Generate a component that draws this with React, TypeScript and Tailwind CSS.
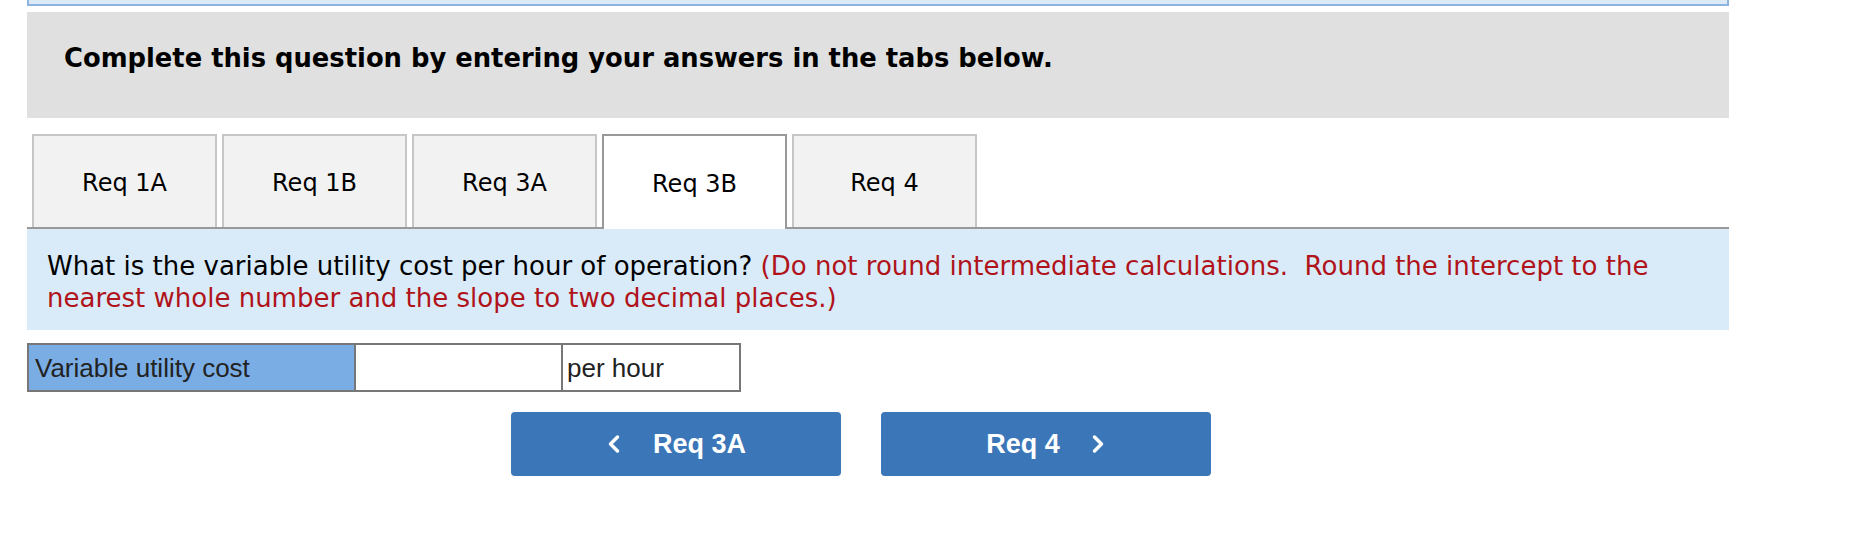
import { ChevronLeft, ChevronRight } from "lucide-react";

const tabs = ["Req 1A", "Req 1B", "Req 3A", "Req 3B", "Req 4"];

export default function App() {
  const active = "Req 3B";

  return (
    <div className="w-[1855px] h-[552px] bg-white font-['DejaVu_Sans',sans-serif] text-black">
      <div className="ml-[27px] w-[1702px]">
        {/* bottom edge of previous panel */}
        <div className="h-[6px] border-x-2 border-b-2 border-[#8db3df] bg-[#dce9f6]" />

        {/* Header */}
        <div className="mt-[6px] h-[106px] bg-[#e0e0e0] flex items-center pl-[37px] pb-[14px]">
          <h1 className="text-[25.8px] font-bold">
            Complete this question by entering your answers in the tabs below.
          </h1>
        </div>

        {/* Tabs */}
        <div className="mt-[16px] flex gap-[5px] pl-[5px] border-b-2 border-[#999999]">
          {tabs.map((t) => (
            <div key={t}
              className={`w-[185px] flex items-center justify-center text-[24px] pt-[3px] -mb-[2px] ${t === active ? "bg-white border-2 border-b-0 border-[#999999] h-[95px]" : "bg-[#f2f2f2] border-2 border-b-0 border-[#c6c6c6] h-[93px]"}`}>
              {t}
            </div>
          ))}
        </div>

        {/* Question */}
        <div className="bg-[#d9ebf9] h-[101px] pl-[20px] pr-[40px] pt-[21px] text-[26px] leading-[32px]">
          What is the variable utility cost per hour of operation?{" "}
          <span className="text-[#b0131a]">
            (Do not round intermediate calculations.&nbsp; Round the intercept to the nearest whole number and the slope to two decimal places.)
          </span>
        </div>

        {/* Answer row */}
        <div className="mt-[13px] flex w-[714px] h-[49px] border-2 border-[#777777] font-['Liberation_Sans',sans-serif] text-[26px] text-[#222222]">
          <div className="w-[327px] bg-[#7aade4] border-r-2 border-[#777777] flex items-center pl-[6px] pt-[2px]">Variable utility cost</div>
          <div className="w-[207px] bg-white border-r-2 border-[#777777]" />
          <div className="flex-1 bg-white flex items-center pl-[4px] pt-[2px]">per hour</div>
        </div>

        {/* Nav buttons */}
        <div className="mt-[20px] ml-[484px] flex gap-[40px] font-['Liberation_Sans',sans-serif]">
          <button className="w-[330px] h-[64px] rounded-[4px] bg-[#3b76b8] text-white text-[27px] font-bold flex items-center justify-center gap-[25px] pr-[6px]">
            <ChevronLeft size={28} strokeWidth={3} />
            <span>Req 3A</span>
          </button>
          <button className="w-[330px] h-[64px] rounded-[4px] bg-[#3b76b8] text-white text-[27px] font-bold flex items-center justify-center gap-[24px] pl-[6px]">
            <span>Req 4</span>
            <ChevronRight size={28} strokeWidth={3} />
          </button>
        </div>
      </div>
    </div>
  );
}
